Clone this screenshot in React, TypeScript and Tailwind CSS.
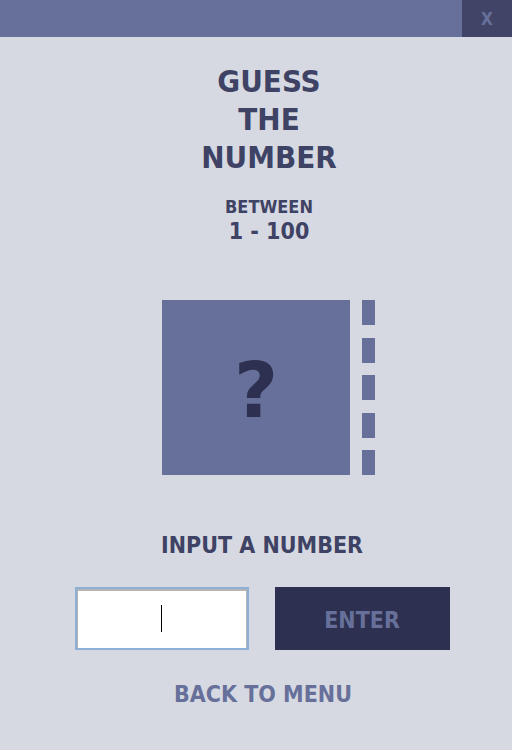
import React from "react";

const F = { fontFamily: "'DejaVu Sans Condensed', 'DejaVu Sans', sans-serif", fontStretch: "condensed" as const };

export default function App() {
  return (
    <div className="w-[512px] h-[750px] bg-[#d6d9e1] flex flex-col items-center font-bold" style={F}>
      <div className="w-full h-[37px] bg-[#67709a] flex justify-end">
        <div className="w-[50px] h-full bg-[#414467] flex items-center justify-center pt-[2px] text-[17px] text-[#67709a] leading-none">X</div>
      </div>
      <div className="mt-[25px] ml-[26px] text-[31px] leading-[38px] text-[#3e4264] text-center">
        <div>GUESS</div>
        <div>THE</div>
        <div>NUMBER</div>
      </div>
      <div className="mt-[21px] ml-[26px] text-[18px] leading-[20px] text-[#3e4264]">BETWEEN</div>
      <div className="mt-[1px] ml-[26px] text-[23px] leading-[26px] text-[#3e4264]">1 - 100</div>
      <div className="mt-[56px] flex gap-[12px] ml-[25px]">
        <div className="w-[188px] h-[175px] bg-[#67709a] flex items-center justify-center pt-[6px]">
          <span className="text-[76px] leading-none text-[#2d3050]" style={{ fontFamily: "'DejaVu Sans', sans-serif", fontStretch: "normal" }}>?</span>
        </div>
        <div className="h-[175px] flex flex-col justify-between">
          <div className="w-[13px] h-[25px] bg-[#67709a]" />
          <div className="w-[13px] h-[25px] bg-[#67709a]" />
          <div className="w-[13px] h-[25px] bg-[#67709a]" />
          <div className="w-[13px] h-[25px] bg-[#67709a]" />
          <div className="w-[13px] h-[25px] bg-[#67709a]" />
        </div>
      </div>
      <div className="mt-[57px] text-[23px] leading-[26px] text-[#3e4264] ml-[12px]">INPUT A NUMBER</div>
      <div className="mt-[29px] flex gap-[26px] ml-[12px]">
        <div className="w-[174px] h-[63px] border-2 border-[#8db0d6] bg-white shadow-[inset_0_1px_0_1px_#b4b4b4] flex items-center justify-center">
          <div className="w-px h-[27px] bg-black" />
        </div>
        <div className="w-[175px] h-[63px] bg-[#2d3050] flex items-center justify-center pt-[3px] text-[23px] text-[#67709a]">ENTER</div>
      </div>
      <div className="mt-[31px] text-[23px] leading-[26px] text-[#67709a] ml-[14px]">BACK TO MENU</div>
    </div>
  );
}
